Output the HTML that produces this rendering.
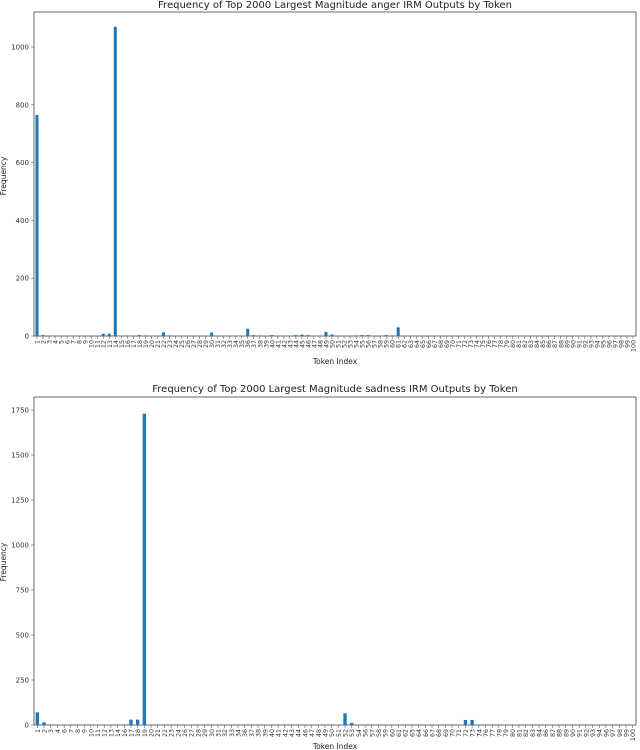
<!DOCTYPE html>
<html><head><meta charset="utf-8"><style>
body{margin:0;background:#fff;width:640px;height:750px;overflow:hidden}
svg{display:block;font-family:"DejaVu Sans","Liberation Sans",sans-serif}
</style></head><body>
<svg id="s" width="640" height="750" xmlns="http://www.w3.org/2000/svg">
<text x="335" y="8" font-size="10" text-anchor="middle" fill="#222">Frequency of Top 2000 Largest Magnitude anger IRM Outputs by Token</text>
<text x="335" y="392" font-size="10" text-anchor="middle" fill="#222">Frequency of Top 2000 Largest Magnitude sadness IRM Outputs by Token</text>
<text x="335" y="364" font-size="7.5" text-anchor="middle" fill="#222">Token Index</text>
<text x="335" y="749" font-size="7.5" text-anchor="middle" fill="#222">Token Index</text>
<text transform="translate(6,176) rotate(-90)" font-size="7.5" text-anchor="middle" fill="#222">Frequency</text>
<text transform="translate(6,562) rotate(-90)" font-size="7.5" text-anchor="middle" fill="#222">Frequency</text>
<g id="g"></g>
</svg>
<script>
var g=document.getElementById('g'),h='';
function chart(top,zero,pxPer,n,bars,labels,ticks){
 var L=34,R=636,w=(R-L)/n;
 h+='<rect x="'+L+'" y="'+top+'" width="'+(R-L)+'" height="'+(zero-top)+'" fill="none" stroke="#444" stroke-width="0.8"/>';
 for(var k in bars){var i=+k,v=bars[k],x=L+w*(i+0.25),hh=v*pxPer;
  h+='<rect x="'+x.toFixed(2)+'" y="'+(zero-hh).toFixed(2)+'" width="'+(w*0.5).toFixed(2)+'" height="'+hh.toFixed(2)+'" fill="#1f77b4"/>';}
 for(var i=0;i<n;i++){var cx=L+w*(i+0.5);
  h+='<line x1="'+cx+'" x2="'+cx+'" y1="'+zero+'" y2="'+(zero+3)+'" stroke="#444" stroke-width="0.5"/>';
  h+='<text transform="translate('+(cx+2.5)+','+(zero+4)+') rotate(-90)" font-size="6.3" text-anchor="end" fill="#333">'+labels[i]+'</text>';}
 ticks.forEach(function(t){var y=zero-t*pxPer;
  h+='<line x1="'+(L-3)+'" x2="'+L+'" y1="'+y+'" y2="'+y+'" stroke="#444" stroke-width="0.5"/>';
  h+='<text x="'+(L-5)+'" y="'+(y+2.5)+'" font-size="7" text-anchor="end" fill="#333">'+t+'</text>';});
}
var l1=[];for(var i=1;i<=100;i++)l1.push(i);
chart(12,336,0.289,100,{0:765,1:3,2:1,3:1,4:1,11:8,12:8,13:1070,15:2,17:3,18:2,21:13,22:2,29:12,35:25,36:3,37:2,39:3,43:3,44:5,45:3,47:1,48:14,49:5,53:2,54:3,55:3,58:3,59:2,60:30},l1,[0,200,400,600,800,1000]);
var l2=[],v=1;for(var i=0;i<90;i++){l2.push(v);v+=(i%9==3)?2:1;}
var b2={0:70,1:15,14:30,15:30,16:1730};
b2[Math.round((342-34)/6.69-0.5)]=65;b2[Math.round((349-34)/6.69-0.5)]=12;
b2[Math.round((465-34)/6.69-0.5)]=28;b2[Math.round((471-34)/6.69-0.5)]=28;
chart(397,725,0.18,90,b2,l2,[0,250,500,750,1000,1250,1500,1750]);
g.innerHTML=h;
</script>
</body></html>
